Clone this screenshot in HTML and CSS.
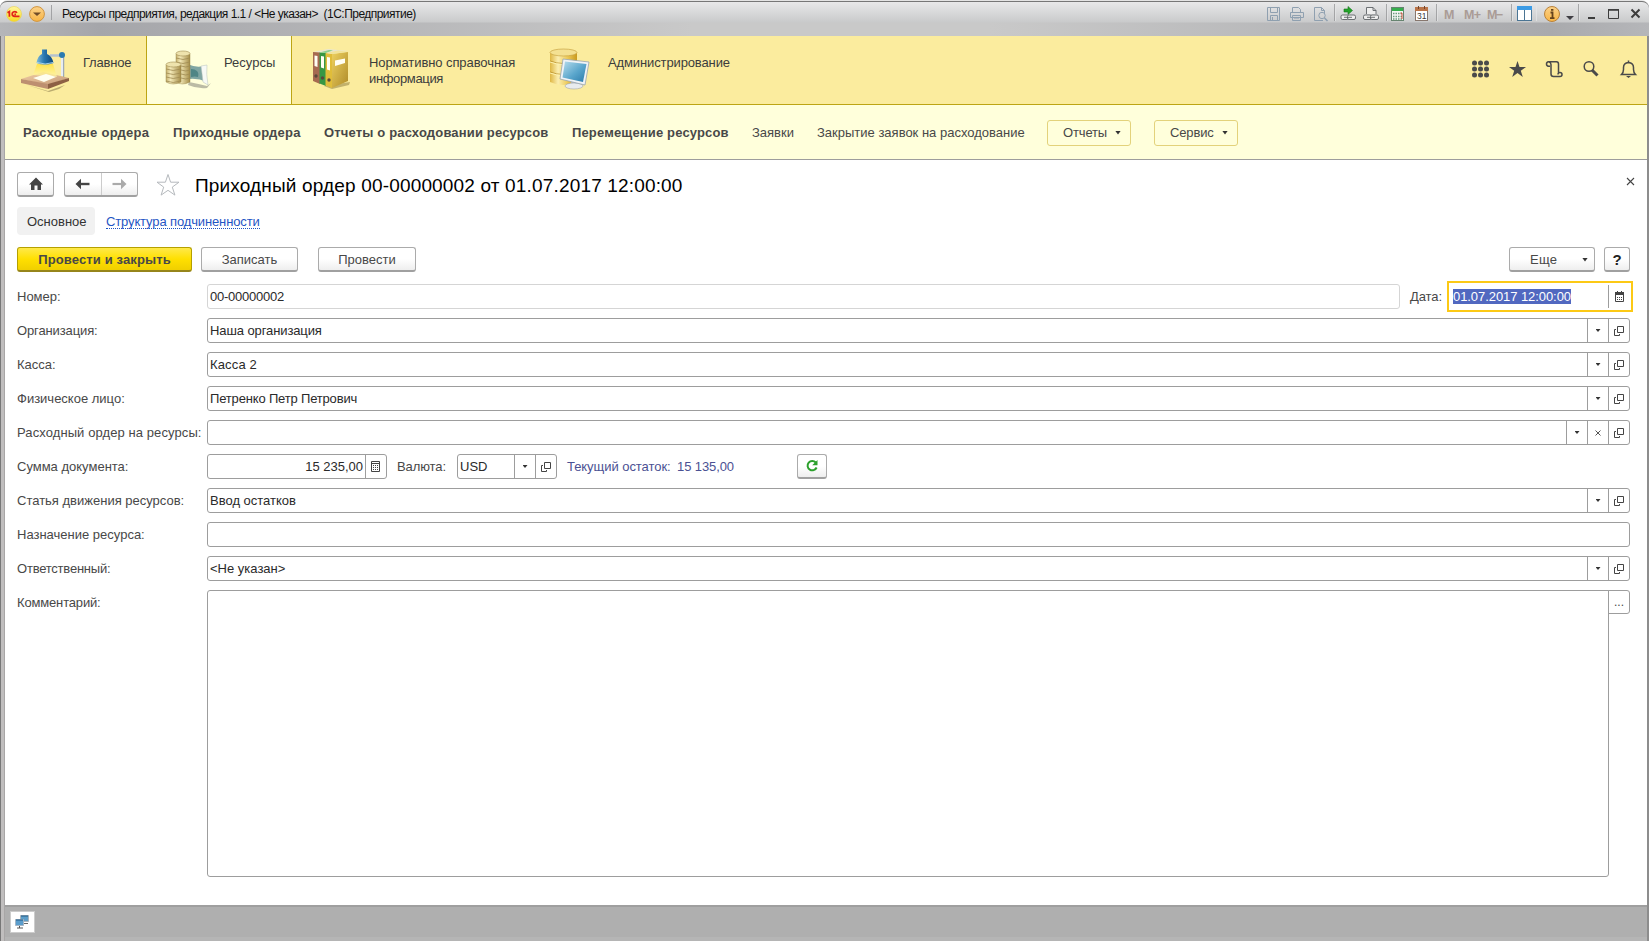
FILE: index.html
```html
<!DOCTYPE html>
<html lang="ru">
<head>
<meta charset="utf-8">
<title>Ресурсы предприятия</title>
<link rel="stylesheet" href="styles.css">
</head>
<body>
<div class="window">
  <header class="titlebar">
    <svg class="logo" width="16" height="16" viewBox="0 0 16 16"><defs><linearGradient id="lg" x1="0" y1="0" x2="0" y2="1"><stop offset="0" stop-color="#fff7a0"/><stop offset="1" stop-color="#f8d820"/></linearGradient><linearGradient id="og" x1="0" y1="0" x2="0" y2="1"><stop offset="0" stop-color="#fbd28a"/><stop offset="1" stop-color="#f8b545"/></linearGradient></defs><circle cx="8" cy="8" r="7.500" fill="url(#lg)" stroke="#ead04a" stroke-width=".6"/><path d="M1.500 6.800 3.400 5.500V10.800M10.800 7C10.300 5.300 6.200 5 6.200 8c0 2.200 1.500 2.300 2.500 2.300H13.500M10 8.400H8.400" fill="none" stroke="#e2231a" stroke-width="1.700"/></svg>
    <svg class="sysmenu" width="16" height="16" viewBox="0 0 16 16"><circle cx="8" cy="8" r="7.400" fill="url(#og)" stroke="#cf9440"/><path d="M4 6.500h8L8 10z" fill="#704c28"/></svg>
    <i class="tsep"></i>
    <span class="apptitle">Ресурсы предприятия, редакция 1.1 / &lt;Не указан&gt;&nbsp; (1С:Предприятие)</span>
    <svg class="systools" width="399" height="28" viewBox="0 0 399 28">
      <g stroke="#8f9092"><path d="M84.500 4v17M136.500 4v17M186.500 4v17M261.500 4v17M328.500 4v17" opacity=".7"/></g>
      <g stroke="#e6e7e8"><path d="M85.500 4v17M137.500 4v17M187.500 4v17M262.500 4v17M286.500 4v17M329.500 4v17" opacity=".7"/></g>
      <g fill="none" stroke="#8fa0b0"><path d="M17.500 7.500h12v13h-12zM20.500 7.500v5h7v-5M20.500 20.500v-5h7v5M22.500 17v3"/><path d="M42.500 12V7.500h6l2 2V12M40.500 12.500h13v5h-13zM42.500 15.500h8v5h-8zM44 18h5"/><path d="M73 20.500h-8.500v-13h7l3 3V13M71.500 7.500v3h3"/><circle cx="72" cy="15.500" r="3.200"/><path d="M74.500 18l3 3" stroke-width="1.600"/></g>
      <path d="M94 9h4V6.500l4.500 4-4.500 4V12h-4z" fill="#24a32b" stroke="#15751b" stroke-width=".6"/>
      <g fill="#eee" stroke="#5f6366" stroke-width=".9"><rect x="91" y="15" width="8" height="4.500" rx="1.500"/><rect x="97.500" y="15" width="8" height="4.500" rx="1.500"/><path d="M94 17.300h8"/><path d="M116.500 14V7.500h6.500l3 3V14"/><path d="M123 7.500v3h3" fill="none"/><rect x="113.500" y="15" width="8" height="4.500" rx="1.500"/><rect x="120.500" y="15" width="8" height="4.500" rx="1.500"/><path d="M117 17.300h8"/></g>
      <rect x="141.500" y="7.500" width="12" height="13" fill="#f4f7f4" stroke="#668470"/><path d="M142 8h11v3h-11z" fill="#35ae4c"/><path d="M143 13.500h10M143 16.500h10M143 19h10" stroke="#6d9a80" stroke-width="1.500" stroke-dasharray="1.500 1"/><path d="M150.500 13h1.500v6" stroke="#d25138" fill="none"/>
      <rect x="165.500" y="7.500" width="12" height="13" fill="#fff" stroke="#87776e"/><path d="M165 7h13v4h-13z" fill="#ba7448"/><path d="M168.500 6v3M174.500 6v3" stroke="#70452e"/><text x="167" y="19" font-size="8.500" fill="#3c3c3c">31</text>
      <g fill="#aa9c96" font-size="12.500" font-weight="bold"><text x="194" y="19">M</text><text x="214" y="19" textLength="17">M+</text><text x="237" y="19" textLength="16">M−</text></g>
      <rect x="267.500" y="6.500" width="14" height="14" fill="#fff" stroke="#4b7594"/><path d="M267 6h15v4h-15z" fill="#3b9be5"/><path d="M274.500 10v10" stroke="#4b7594"/>
      <circle cx="302" cy="14" r="7.500" fill="url(#og)" stroke="#b9823a"/><path d="M300.500 12.500h2V18M300 18.200h4.500M301 9.800h2.400" stroke="#65431d" stroke-width="1.800" fill="none"/>
      <path d="M316 16h8l-4 4z" fill="#403f44"/>
      <path d="M338 18h7" stroke="#3c3c3c" stroke-width="2"/><path d="M358.500 10h10v8.500h-10z" fill="none" stroke="#3c3c3c"/><path d="M358 9.800h11" stroke="#3c3c3c" stroke-width="1.500"/><path d="M381.500 9.500l8 8M389.500 9.500l-8 8" stroke="#3c3c3c" stroke-width="2"/>
    </svg>
  </header>
  <div class="app">
    <nav class="sections">
      <div class="sec s1">
        <svg class="sico" width="52" height="44" viewBox="0 0 52 44"><defs><linearGradient id="wood" x1="0" y1="0" x2="1" y2="1"><stop offset="0" stop-color="#f1cda4"/><stop offset="1" stop-color="#c49a78"/></linearGradient><linearGradient id="blue" x1="0" x2="1"><stop offset="0" stop-color="#7fbcdc"/><stop offset=".45" stop-color="#2878b0"/><stop offset="1" stop-color="#0d4679"/></linearGradient><linearGradient id="gold" x1="0" x2="1"><stop offset="0" stop-color="#c5b06c"/><stop offset=".3" stop-color="#f3e9b8"/><stop offset="1" stop-color="#a58d48"/></linearGradient><linearGradient id="glow" x1="0" y1="0" x2="0" y2="1"><stop offset="0" stop-color="#ffe24a"/><stop offset="1" stop-color="#fff6a8" stop-opacity=".7"/></linearGradient></defs><path d="M8 37 29 43 46 37 40 41 30 44z" fill="#7a6a40" opacity=".5"/><path d="M2 31 24 24 50 30 29 37z" fill="url(#wood)"/><path d="M2 31v4l27 6v-5z" fill="#bd8f70"/><path d="M29 36v5l21-8v-3z" fill="#8d6044"/><path d="M43.500 8v20" stroke="#e8edf2" stroke-width="3"/><path d="M44.700 8v21" stroke="#8d9bab"/><path d="M31 7.500h12" stroke="#b4c2cf" stroke-width="2.500"/><path d="M18 16 14 27 38 29 34 16z" fill="url(#glow)"/><path d="M14 30 27 26 37 29 25 34z" fill="#fffef0"/><path d="M23 1.500h5v4.500q5 2 6.500 9-9 3-17 0 1-7 5.500-9z" fill="url(#blue)"/><path d="M18 14.500q8 3 16.500 0" stroke="#a7d2e8" fill="none"/><circle cx="43" cy="7" r="3" fill="#2a7ab0"/></svg>
        <span class="t1">Главное</span>
      </div>
      <div class="sec s2 active">
        <svg class="sico" width="48" height="40" viewBox="0 0 48 40"><path d="M24 32q10 2 18 4l4-3-4 5q-10 1-19-3z" fill="#8d8d80" opacity=".6"/><path d="M22 14q10 4 16 2l4 16q-9-4-18-3z" fill="#7fa5a2"/><path d="M36 16l6-1q-1 9 1 20l-5-3q-1-9-2-16z" fill="#f7f9f5" stroke="#b5c0bd" stroke-width=".5"/><path d="M26 19q4 0 6 2t1 6q-3-1-7 0z" fill="#4f8585"/><g fill="url(#gold)" stroke="#8d783c" stroke-width=".4"><path d="M11 4v28q6 4 14 0V4z"/><path d="M1 15v17q7 4 15 0V15z"/></g><g fill="none" stroke="#9f8c53" stroke-width=".8"><path d="M11 8q7 3 14 0M11 12q7 3 14 0M16 16q5 2 9 0M16 20q5 2 9 0M16 24q5 2 9 0M16 28q5 2 9 0M1 19q7 3 15 0M1 23q7 3 15 0M1 27q7 3 15 0M1 31q7 3 15 0"/></g><g fill="#eee3ad" stroke="#a08c50" stroke-width=".6"><ellipse cx="18" cy="3.500" rx="7" ry="2.500"/><ellipse cx="8.500" cy="14.500" rx="7.500" ry="2.500"/></g></svg>
        <span>Ресурсы</span>
      </div>
      <div class="sec s3">
        <svg class="sico" width="40" height="44" viewBox="0 0 40 44"><defs><linearGradient id="box" x1="0" y1="0" x2="1" y2="1"><stop offset="0" stop-color="#ecd060"/><stop offset="1" stop-color="#b08c28"/></linearGradient></defs><path d="M12 38 38 34 37 37 20 41z" fill="#6b5a20" opacity=".4"/><path d="M1 4 16 1 36 3 20 6z" fill="#e9e6cf"/><path d="M1 4 8 4.500V36l-7-3z" fill="#a66a50"/><path d="M7.500 4.500 14 5v33l-6.500-2.500z" fill="#379744"/><path d="M13.500 5 20 6v34l-6.500-2.500z" fill="#e0bd3a"/><path d="M20 6 36 4v29l-16 7z" fill="url(#box)"/><path d="M7.500 4.500 17 2l4 .3L14 5z" fill="#8ccf8e"/><path d="M14 5 26 2.500l10 1.300L20 6z" fill="#f2e49a"/><g fill="#fffef4"><path d="M2.500 7.500l3 .5v11l-3-1zM9 8l3 .5v12l-3-1zM15 9l3 .5v13l-3-1zM23 12.500l10-2V15l-10 3z"/></g><g fill="#5b483a"><circle cx="4" cy="28" r="1.700"/><circle cx="10.500" cy="30" r="1.700"/><circle cx="17" cy="32" r="1.700"/></g></svg>
        <span><span class="t2">Нормативно справочная</span><br><span class="t3">информация</span></span>
      </div>
      <div class="sec s4">
        <svg class="sico" width="42" height="44" viewBox="0 0 42 44"><defs><linearGradient id="cyl" x1="0" x2="1"><stop offset="0" stop-color="#dfb744"/><stop offset=".3" stop-color="#fbeeb0"/><stop offset=".65" stop-color="#ecc958"/><stop offset="1" stop-color="#c99a1f"/></linearGradient><linearGradient id="scr" x1="0" y1="0" x2="1" y2="1"><stop offset="0" stop-color="#b6dcec"/><stop offset=".55" stop-color="#5aa6cc"/><stop offset="1" stop-color="#2b7baa"/></linearGradient></defs><path d="M1 4v30q13 6 27 0V4z" fill="url(#cyl)"/><path d="M1 13q13 5 27 0M1 24q13 5 27 0" stroke="#b78e2b" fill="none" stroke-width=".8"/><path d="M1 14q13 5 27 0M1 25q13 5 27 0" stroke="#fff3b0" fill="none"/><ellipse cx="14.500" cy="4.500" rx="13.500" ry="3.500" fill="#f4e192" stroke="#c19b37" stroke-width=".6"/><path d="M22 32h7v6h-7z" fill="#b9bec4"/><ellipse cx="25" cy="38" rx="9" ry="3" fill="#e8ebee" stroke="#a1a6ab" stroke-width=".6"/><path d="M14 11 40 14 36 37 11 31z" fill="#f0f3f6" stroke="#98a5b0" stroke-width=".8"/><path d="M16 13.500 37.500 16 34 34 13.500 29.500z" fill="url(#scr)"/></svg>
        <span class="t4">Администрирование</span>
      </div>
      <div class="tools">
        <svg width="170" height="24" viewBox="0 0 170 24"><g fill="#4a4a4a"><circle cx="4.500" cy="6" r="2.500"/><circle cx="10.500" cy="6" r="2.500"/><circle cx="16.500" cy="6" r="2.500"/><circle cx="4.500" cy="12" r="2.500"/><circle cx="10.500" cy="12" r="2.500"/><circle cx="16.500" cy="12" r="2.500"/><circle cx="4.500" cy="18" r="2.500"/><circle cx="10.500" cy="18" r="2.500"/><circle cx="16.500" cy="18" r="2.500"/><path d="M47.500 4l2 6h6.500l-5.200 3.700 2 6.300-5.300-3.900-5.300 3.900 2-6.300L39 10h6.500z"/></g><g fill="none" stroke="#4a4a4a" stroke-width="1.500"><path d="M80 9.300h-1.500q-2-.3-2-2.300t2-2.300h8q2 0 2 2.300v9M79 5q2 .5 2 2.500v9.500q0 2.500 2.500 2.500h6.500q2 0 2-2t-2-2-2 2"/><circle cx="119" cy="9.500" r="4.800"/><path d="M122 13l5.500 5.500" stroke-width="3"/><path d="M151.500 17.500q2-2 2-5v-2q0-4.500 5-5 5 .5 5 5v2q0 3 2 5zM158.500 5.500V3.500"/></g><path d="M156 19h5l-2.500 2z" fill="#4a4a4a"/></svg>
      </div>
    </nav>
    <nav class="commands">
      <b class="c1">Расходные ордера</b><b class="c2">Приходные ордера</b><b class="c3">Отчеты о расходовании ресурсов</b><b class="c4">Перемещение ресурсов</b><span class="c5">Заявки</span><span class="c6">Закрытие заявок на расходование</span>
      <button class="drop">Отчеты<i class="caret"></i></button><button class="drop">Сервис<i class="caret"></i></button>
    </nav>
    <main class="page">
      <div class="head">
        <button class="btn home"><svg width="16" height="14" viewBox="0 0 16 14"><path d="M8 .5 15 7.500H13V13H9.500V8.500H6.500V13H3V7.500H1z" fill="#444"/></svg></button>
        <div class="btn history"><span><svg width="15" height="12" viewBox="0 0 15 12"><path d="M14.500 6H4" stroke="#444" stroke-width="2.400"/><path d="M.5 6 6 .8v10.400z" fill="#444"/></svg></span><span><svg width="15" height="12" viewBox="0 0 15 12"><path d="M.5 6H11" stroke="#aaa" stroke-width="2.200"/><path d="M14.500 6 9 .8v10.400z" fill="#aaa"/></svg></span></div>
        <svg class="star" width="24" height="24" viewBox="0 0 24 24"><path d="M12 1.500l2.600 7.700H23l-6.700 4.900 2.600 8L12 17.300l-6.900 4.800 2.600-8L1 9.200h8.400z" fill="#fff" stroke="#b5b9bd"/></svg>
        <h1>Приходный ордер 00-00000002 от 01.07.2017 12:00:00</h1>
        <svg class="close" width="9" height="9" viewBox="0 0 9 9"><path d="M1 1l7 7M8 1 1 8" stroke="#444" stroke-width="1.100"/></svg>
      </div>
      <div class="tabs"><span class="tab">Основное</span><a class="link">Структура подчиненности</a></div>
      <div class="bar">
        <button class="btn primary">Провести и закрыть</button>
        <button class="btn b2">Записать</button>
        <button class="btn b3">Провести</button>
        <button class="btn more">Еще<i class="caret"></i></button>
        <button class="btn help">?</button>
      </div>
      <div class="form">
        <div class="row"><label>Номер:</label><div class="field light"><span class="val v1">00-00000002</span></div><span class="datelabel">Дата:</span>
          <div class="date"><span class="val"><span class="sel">01.07.2017 12:00:00</span></span><span class="dbtn"><svg width="9" height="11" viewBox="0 0 9 11"><path d="M.5 1.500h8v9h-8z" fill="none" stroke="#444"/><path d="M0 1h9v3H0zM2 0h1v2H2zM6 0h1v2H6z" fill="#444"/><path d="M2 6.500h6M2 8.500h6" stroke="#444" stroke-dasharray="1 1"/></svg></span></div></div>
        <div class="row"><label class="l2">Организация:</label><div class="field"><span class="val v2">Наша организация</span><span class="fb"><i class="caret"></i></span><span class="fb"><svg width="10" height="10" viewBox="0 0 10 10"><path d="M3.500.5h6v6h-6zM2 3.500H.5v6h5V8" fill="none" stroke="#444"/></svg></span></div></div>
        <div class="row"><label>Касса:</label><div class="field"><span class="val v3">Касса 2</span><span class="fb"><i class="caret"></i></span><span class="fb"><svg width="10" height="10" viewBox="0 0 10 10"><path d="M3.500.5h6v6h-6zM2 3.500H.5v6h5V8" fill="none" stroke="#444"/></svg></span></div></div>
        <div class="row"><label>Физическое лицо:</label><div class="field"><span class="val v4">Петренко Петр Петрович</span><span class="fb"><i class="caret"></i></span><span class="fb"><svg width="10" height="10" viewBox="0 0 10 10"><path d="M3.500.5h6v6h-6zM2 3.500H.5v6h5V8" fill="none" stroke="#444"/></svg></span></div></div>
        <div class="row"><label class="l5">Расходный ордер на ресурсы:</label><div class="field"><span class="val"></span><span class="fb"><i class="caret"></i></span><span class="fb"><svg width="6" height="6" viewBox="0 0 6 6"><path d="M.5.5l5 5M5.500.5l-5 5" stroke="#555"/></svg></span><span class="fb"><svg width="10" height="10" viewBox="0 0 10 10"><path d="M3.500.5h6v6h-6zM2 3.500H.5v6h5V8" fill="none" stroke="#444"/></svg></span></div></div>
        <div class="row"><label>Сумма документа:</label><div class="field sum"><span class="val">15 235,00</span><span class="fb"><svg width="9" height="11" viewBox="0 0 9 11"><path d="M.5.500h8v10h-8z" fill="none" stroke="#444"/><path d="M1 2.500h7" stroke="#444"/><path d="M2 4.500h6M2 6.500h6M2 8.500h6" stroke="#444" stroke-dasharray="1 1"/></svg></span></div><span class="curlabel">Валюта:</span><div class="field cur"><span class="val">USD</span><span class="fb"><i class="caret"></i></span><span class="fb"><svg width="10" height="10" viewBox="0 0 10 10"><path d="M3.500.5h6v6h-6zM2 3.500H.5v6h5V8" fill="none" stroke="#444"/></svg></span></div><span class="rest">Текущий остаток:</span><span class="restval">15 135,00</span><button class="btn refresh"><svg width="14" height="14" viewBox="0 0 14 14"><path d="M10.800 3.500A4.700 4.700 0 1 0 11.600 8.500" fill="none" stroke="#2ba02b" stroke-width="2"/><path d="M12.500 1v5.300H7.200z" fill="#2ba02b"/></svg></button></div>
        <div class="row"><label>Статья движения ресурсов:</label><div class="field"><span class="val">Ввод остатков</span><span class="fb"><i class="caret"></i></span><span class="fb"><svg width="10" height="10" viewBox="0 0 10 10"><path d="M3.500.5h6v6h-6zM2 3.500H.5v6h5V8" fill="none" stroke="#444"/></svg></span></div></div>
        <div class="row"><label>Назначение ресурса:</label><div class="field"></div></div>
        <div class="row"><label class="l9">Ответственный:</label><div class="field"><span class="val">&lt;Не указан&gt;</span><span class="fb"><i class="caret"></i></span><span class="fb"><svg width="10" height="10" viewBox="0 0 10 10"><path d="M3.500.5h6v6h-6zM2 3.500H.5v6h5V8" fill="none" stroke="#444"/></svg></span></div></div>
        <div class="row"><label class="l10">Комментарий:</label><div class="area"></div><span class="dots">...</span></div>
      </div>
    </main>
    <footer class="status"><span class="task"><svg width="16" height="14" viewBox="0 0 16 14"><path d="M6.500.5h8v6h-8z" fill="#5d9ec9" stroke="#aab4bb"/><path d="M7 1h7" stroke="#235b86"/><path d="M9 8.500h5" stroke="#666"/><path d="M1.500 4.500h8v6h-8z" fill="#5a9dcc" stroke="#a4b5c5"/><path d="M2 5h7" stroke="#235b86"/><path d="M3 13h6M5.500 11v2" stroke="#555"/></svg></span></footer>
  </div>
</div>
</body>
</html>
```
FILE: styles.css
```css
* { box-sizing: border-box; }
body { margin: 0; font: 13px/16px "Liberation Sans", Arial, sans-serif; color: #484848; overflow: hidden; background: #fff; }
svg { display: block; flex: none; }
button { font: inherit; color: inherit; padding: 0; }
.window { width: 1649px; height: 941px; padding: 0 2px 4px 5px; display: flex; flex-direction: column; background: linear-gradient(90deg, #777 0 1px, #c0bebe 1px 4px, #a8a6a6 4px 5px, #b5b5b5 5px 1647px, #8d8d8d 1647px); border-radius: 8px 8px 0 0; border-top: 1px solid #e4e4e4; }
.titlebar { height: 35px; flex: none; margin: 0 -2px 0 -5px; padding-left: 6px; border-top: 1px solid #777; display: flex; align-items: flex-start; border-radius: 7px 7px 0 0; background: linear-gradient(#e8e8e9, #c9cacb 20px, transparent 21px), linear-gradient(90deg, #b5b6b9, #a5a6aa 6%, #c9c9c9 42%, #c9c9c9 60%, #a9aaad 94%, #b5b6b9); }
.logo { margin-top: 4px; }
.sysmenu { margin: 4px 0 0 7px; }
.tsep { width: 1px; height: 15px; background: #a2a3a5; margin: 3px 10px 0 6px; }
.apptitle { margin-top: 4px; color: #111; font-size: 12px; letter-spacing: -.525px; white-space: nowrap; flex: 1; }
.systools { margin-top: -2px; font-family: "Liberation Sans", sans-serif; }
.app { flex: 1; display: flex; flex-direction: column; min-height: 0; background: #fff; }
.sections { height: 69px; flex: none; background: #fbec9e; border-bottom: 1px solid #bda514; display: flex; color: #3c3c3c; }
.sec { display: flex; align-items: flex-start; padding-top: 12px; white-space: nowrap; height: 68px; }
.sec > span { margin-top: 7px; }
.s1 { width: 141px; padding-left: 14px; }
.s1 > span { margin-left: 12px; }
.s2 { width: 146px; background: #ffffdb; border: solid #bda514; border-width: 0 1px; padding-left: 18px; }
.s2 .sico { margin-top: 2px; }
.s2 > span { margin-left: 11px; }
.s3 { width: 240px; padding-left: 20px; }
.s3 > span { margin-left: 17px; }
.s4 { padding-left: 17px; }
.s4 > span { margin-left: 17px; }
.t1 { letter-spacing: -.2px; }
.t2 { letter-spacing: -.08px; }
.t3 { letter-spacing: -.35px; }
.t4 { letter-spacing: -.12px; }
.tools { margin: 21px 0 0 auto; padding-right: 7px; }
.commands { height: 55px; flex: none; background: #ffffdb; border-bottom: 1px solid #9d9d9d; display: flex; align-items: center; padding: 1px 0 0 18px; white-space: nowrap; }
.commands > b, .commands > span { flex: none; }
.c1 { width: 150px; letter-spacing: .29px; }
.c2 { width: 151px; letter-spacing: .21px; }
.c3 { width: 248px; letter-spacing: .16px; }
.c4 { width: 180px; letter-spacing: .15px; }
.c5 { width: 65px; }
.c6 { width: 230px; }
.drop { flex: none; width: 84px; height: 26px; border: 1px solid #e3d27b; border-radius: 3px; background: transparent; display: flex; align-items: center; padding-left: 15px; margin-right: 23px; letter-spacing: -.15px; }
.caret { width: 6px; height: 4px; background: #333; clip-path: polygon(0 0, 100% 0, 50% 100%); }
.drop .caret { margin-left: auto; margin-right: 9px; }
.page { flex: 1; padding: 12px 17px 0 12px; }
.head { display: flex; height: 35px; }
.btn { height: 25px; border: 1px solid #ababab; border-bottom: 2px solid #a0a0a0; border-radius: 3px; background: linear-gradient(#fff 50%, #eee); display: flex; align-items: center; justify-content: center; white-space: nowrap; }
.bar .btn { padding-top: 1px; }
.home { width: 37px; }
.history { width: 74px; margin-left: 10px; }
.history span { flex: 1; height: 22px; display: flex; align-items: center; justify-content: center; }
.history span + span { border-left: 1px solid #ccc; }
.star { margin: 1px 0 0 18px; }
h1 { margin: 2px 0 0 15px; font: 19px/24px "Liberation Sans", Arial, sans-serif; letter-spacing: .165px; color: #000; white-space: nowrap; }
.close { margin: 5px -5px 0 auto; }
.tabs { display: flex; height: 40px; align-items: flex-start; }
.tab { width: 78px; height: 28px; line-height: 30px; background: #f1f1f1; border-radius: 4px; padding-left: 10px; color: #333; }
.link { margin: 7px 0 0 11px; height: 15px; color: #1f55c4; border-bottom: 1px dotted #1f55c4; letter-spacing: -.13px; }
.bar { display: flex; height: 37px; }
.primary { width: 175px; background: linear-gradient(#ffe94a, #ffe000 50%, #f0cf00); border-color: #b5a000; border-bottom-color: #96851b; font-weight: bold; letter-spacing: .13px; }
.b2 { width: 97px; margin-left: 9px; }
.b3 { width: 98px; margin-left: 20px; }
.more { width: 86px; margin-left: auto; justify-content: flex-start; padding-left: 20px; letter-spacing: .3px; }
.more .caret { margin-left: auto; margin-right: 6px; }
.help { width: 26px; margin-left: 9px; font-size: 15px; font-weight: bold; color: #222; }
.row { display: flex; height: 34px; white-space: nowrap; }
label { width: 190px; flex: none; padding-top: 5px; }
.l2 { letter-spacing: -.12px; }
.l5 { letter-spacing: .09px; }
.l9 { letter-spacing: -.22px; }
.l10 { letter-spacing: -.16px; }
.field { flex: 1; height: 25px; border: 1px solid #9d9d9d; border-radius: 3px; display: flex; color: #2a2a2a; }
.light { flex: none; width: 1193px; border-color: #d5d5d5; }
.val { flex: 1; padding: 4px 0 0 2px; }
.v1 { letter-spacing: -.24px; }
.v2 { letter-spacing: -.1px; }
.v3 { letter-spacing: .15px; }
.v4 { letter-spacing: -.17px; }
.fb { width: 21px; border-left: 1px solid #9d9d9d; display: flex; align-items: center; justify-content: center; }
.fb .caret { width: 5px; height: 3px; }
.datelabel { width: 47px; padding: 5px 0 0 10px; letter-spacing: -.1px; }
.date { width: 186px; height: 31px; flex: none; margin: -3px -4px 0 0; border: 2px solid #fcc915; display: flex; color: #222; }
.date .val { padding: 6px 0 0 4px; letter-spacing: -.07px; }
.sel { background: #5168c0; color: #fff; }
.dbtn { width: 23px; height: 23px; margin-top: 2px; padding-right: 2px; border-left: 1px solid #9d9d9d; display: flex; align-items: center; justify-content: center; }
.sum { flex: none; width: 180px; }
.sum .val { text-align: right; padding-right: 2px; }
.sum .fb { padding-right: 1px; }
.curlabel { width: 70px; padding: 5px 0 0 10px; letter-spacing: -.1px; }
.cur { flex: none; width: 100px; }
.rest, .restval { padding-top: 5px; color: #4b5193; }
.rest { width: 110px; padding-left: 10px; letter-spacing: -.05px; }
.restval { width: 130px; padding-left: 10px; letter-spacing: -.1px; }
.refresh { width: 30px; }
.area { width: 1402px; height: 287px; border: 1px solid #9d9d9d; border-radius: 3px 0 3px 3px; }
.dots { width: 22px; height: 24px; margin-left: -1px; border: 1px solid #9d9d9d; border-radius: 0 3px 3px 0; text-align: center; line-height: 23px; font-size: 12px; }
.status { height: 32px; flex: none; background: #afafaf; border-top: 2px solid #9f9f9f; padding: 4px 0 0 5px; }
.task { display: flex; width: 25px; height: 22px; background: #fff; border: 1px solid #ccc; align-items: center; justify-content: center; padding-right: 2px; }
```
